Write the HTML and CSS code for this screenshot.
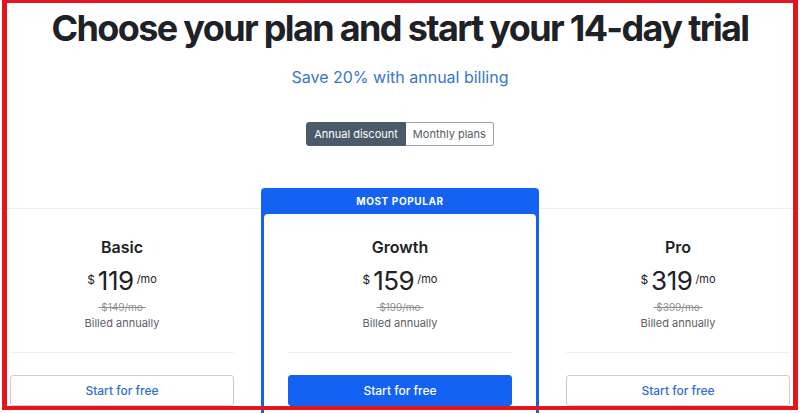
FILE: index.html
```html
<!DOCTYPE html>
<html lang="en">
<head>
    <meta charset="UTF-8">
    <meta name="viewport" content="width=device-width, initial-scale=1.0">
    <title>Pricing</title>
    <link rel="stylesheet" href="styles.css">
</head>
<body>
    <div class="page">
        <header class="hero">
            <h1>Choose your plan and start your 14-day trial</h1>
            <p class="save">Save 20% with annual billing</p>
            <div class="toggle">
                <button class="toggle-btn active">Annual discount</button>
                <button class="toggle-btn">Monthly plans</button>
            </div>
        </header>

        <section class="plans">
            <div class="plan">
                <div class="plan-body">
                    <h2>Basic</h2>
                    <div class="price"><span class="cur">$</span><span class="amount">119</span><span class="per">/mo</span></div>
                    <div class="old">&nbsp;$149/mo&nbsp;</div>
                    <div class="billed">Billed annually</div>
                    <hr>
                    <button class="start">Start for free</button>
                </div>
            </div>

            <div class="plan popular">
                <div class="badge">MOST POPULAR</div>
                <div class="plan-body">
                    <h2>Growth</h2>
                    <div class="price"><span class="cur">$</span><span class="amount">159</span><span class="per">/mo</span></div>
                    <div class="old">&nbsp;$199/mo&nbsp;</div>
                    <div class="billed">Billed annually</div>
                    <hr>
                    <button class="start primary">Start for free</button>
                </div>
            </div>

            <div class="plan">
                <div class="plan-body">
                    <h2>Pro</h2>
                    <div class="price"><span class="cur">$</span><span class="amount">319</span><span class="per">/mo</span></div>
                    <div class="old">&nbsp;$399/mo&nbsp;</div>
                    <div class="billed">Billed annually</div>
                    <hr>
                    <button class="start">Start for free</button>
                </div>
            </div>
        </section>
    </div>
    <div class="frame"></div>
</body>
</html>
```

FILE: styles.css
```css
html, body {
    margin: 0;
    padding: 0;
    height: 100%;
    overflow: hidden;
}

body {
    font-family: 'Inter', 'Noto Sans', sans-serif;
    background-color: #ffffff;
    color: #1e2126;
}

.page {
    height: 100%;
    overflow: hidden;
}

/* red outline drawn over the whole shot */
.frame {
    position: absolute;
    top: 0;
    left: 2px;
    right: 2px;
    bottom: 3px;
    border-style: solid;
    border-color: #e3161d;
    border-width: 3px 5px 4px 5px;
    pointer-events: none;
}

.hero {
    padding-top: 6px;
    text-align: center;
}

h1 {
    margin: 0;
    font-size: 36px;
    line-height: 44px;
    font-weight: 700;
    letter-spacing: -1.65px;
    color: #1e2126;
}

.save {
    margin: 17px 0 0;
    font-size: 16px;
    line-height: 20px;
    color: #3677c9;
}

.toggle {
    margin-top: 35px;
    display: inline-flex;
}

.toggle-btn {
    font-family: inherit;
    font-size: 11px;
    height: 24px;
    padding: 0 7px;
    border: 1px solid #9aa3ad;
    background: #ffffff;
    color: #555c64;
    cursor: pointer;
}

.toggle-btn:first-child {
    border-radius: 3px 0 0 3px;
}

.toggle-btn:last-child {
    border-left: none;
    border-radius: 0 3px 3px 0;
}

.toggle-btn.active {
    background: #4b5a69;
    border-color: #4b5a69;
    color: #ffffff;
}

.plans {
    margin: 42px 0 0 -17px;
    width: 834px;
    display: grid;
    grid-template-columns: repeat(3, 278px);
    align-items: start;
}

.plan {
    margin-top: 20px;
    border-top: 1px solid #eeeeee;
    text-align: center;
}

.plan-body {
    padding: 28px 27px 20px;
}

.plan.popular {
    margin-top: 0;
    border-top: none;
    background: #1462f2;
    border-radius: 4px 4px 0 0;
    padding: 0 3px;
}

.badge {
    height: 26px;
    line-height: 26px;
    font-size: 10px;
    font-weight: 700;
    letter-spacing: 0.6px;
    color: #ffffff;
}

.popular .plan-body {
    background: #ffffff;
    border-radius: 4px 4px 0 0;
    padding: 23px 24px 40px;
}

h2 {
    margin: 0;
    font-size: 16px;
    line-height: 20px;
    font-weight: 600;
    color: #1e2126;
}

.price {
    margin-top: 8px;
    height: 30px;
    display: flex;
    justify-content: center;
    align-items: center;
    gap: 3px;
}

.cur {
    font-size: 12px;
    margin-top: -2px;
}

.amount {
    font-size: 26px;
    font-weight: 400;
    letter-spacing: -0.5px;
}

.per {
    font-size: 11px;
    margin-top: -2px;
}

.old {
    margin-top: 5px;
    font-size: 10px;
    line-height: 14px;
    color: #8a8f95;
    text-decoration: line-through;
}

.billed {
    margin-top: 1px;
    font-size: 11px;
    line-height: 16px;
    color: #5a6068;
}

hr {
    margin: 21px 0 0;
    border: none;
    border-top: 1px solid #f0f0f0;
}

.start {
    margin-top: 22px;
    width: 100%;
    height: 31px;
    font-family: inherit;
    font-size: 12px;
    font-weight: 500;
    color: #2f6fcf;
    background: #ffffff;
    border: 1px solid #c9ccd1;
    border-radius: 3px;
    cursor: pointer;
}

.start.primary {
    background: #1462f2;
    border-color: #1462f2;
    color: #ffffff;
}
```
